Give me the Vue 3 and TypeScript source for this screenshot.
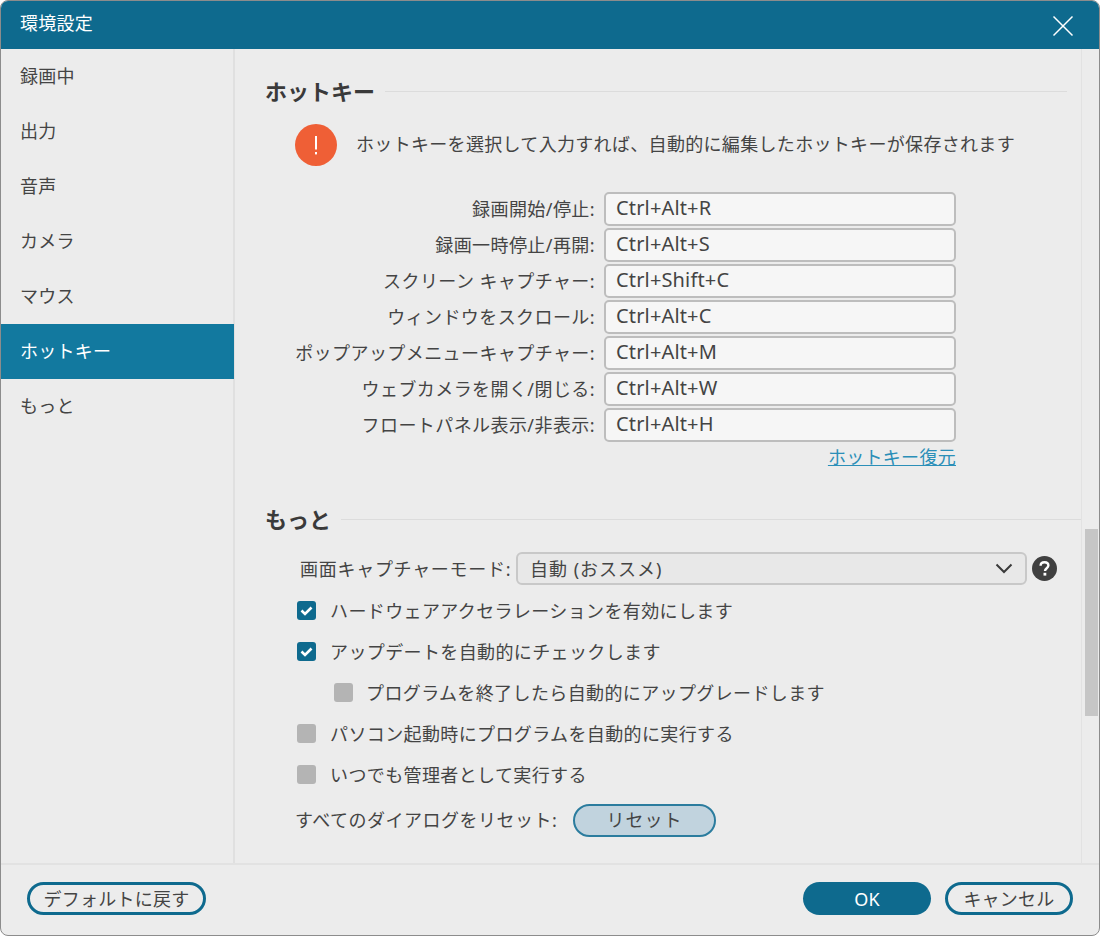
<script setup lang="ts">
const navItems: { label: string; active?: boolean }[] = [
  { label: '録画中' },
  { label: '出力' },
  { label: '音声' },
  { label: 'カメラ' },
  { label: 'マウス' },
  { label: 'ホットキー', active: true },
  { label: 'もっと' },
]
const hotkeys = [
  ['録画開始/停止:', 'Ctrl+Alt+R'],
  ['録画一時停止/再開:', 'Ctrl+Alt+S'],
  ['スクリーン キャプチャー:', 'Ctrl+Shift+C'],
  ['ウィンドウをスクロール:', 'Ctrl+Alt+C'],
  ['ポップアップメニューキャプチャー:', 'Ctrl+Alt+M'],
  ['ウェブカメラを開く/閉じる:', 'Ctrl+Alt+W'],
  ['フロートパネル表示/非表示:', 'Ctrl+Alt+H'],
]
const options = [
  { label: 'ハードウェアアクセラレーションを有効にします', checked: true, sub: false },
  { label: 'アップデートを自動的にチェックします', checked: true, sub: false },
  { label: 'プログラムを終了したら自動的にアップグレードします', checked: false, sub: true },
  { label: 'パソコン起動時にプログラムを自動的に実行する', checked: false, sub: false },
  { label: 'いつでも管理者として実行する', checked: false, sub: false },
]
</script>

<template>
  <div class="window">
    <header class="titlebar">
      <span class="title">環境設定</span>
      <svg class="close" width="22" height="22" viewBox="0 0 22 22" aria-label="閉じる">
        <path d="M1.5 1.5 L20.5 20.5 M20.5 1.5 L1.5 20.5" stroke="#fff" stroke-width="1.5" fill="none" />
      </svg>
    </header>
    <div class="body">
      <nav class="sidebar">
        <div v-for="item in navItems" :key="item.label" class="nav-item" :class="{ active: item.active }">{{ item.label }}</div>
      </nav>
      <main class="content">
        <div class="pane">
          <section class="hotkey-section">
            <div class="heading">
              <h2>ホットキー</h2>
              <span class="rule"></span>
            </div>
            <div class="notice">
              <span class="notice-icon">
                <svg width="42" height="42" viewBox="0 0 42 42">
                  <circle cx="21" cy="21" r="21" fill="#ef5f36" />
                  <path d="M21 12 V25.5" stroke="#fff" stroke-width="2" />
                  <rect x="20" y="28" width="2" height="2.4" fill="#fff" />
                </svg>
              </span>
              <span class="notice-text">ホットキーを選択して入力すれば、自動的に編集したホットキーが保存されます</span>
            </div>
            <div class="hotkey-list">
              <div v-for="row in hotkeys" :key="row[0]" class="hotkey-row">
                <label>{{ row[0] }}</label>
                <div class="input">{{ row[1] }}</div>
              </div>
            </div>
            <div class="restore"><a>ホットキー復元</a></div>
          </section>
          <section class="more-section">
            <div class="heading heading-wide">
              <h2>もっと</h2>
              <span class="rule"></span>
            </div>
            <div class="select-row">
              <label>画面キャプチャーモード:</label>
              <div class="select">
                <span class="select-text">自動 (おススメ)</span>
                <svg width="18" height="11" viewBox="0 0 18 11">
                  <path d="M1.5 1.5 L9 9 L16.5 1.5" stroke="#3a3a3a" stroke-width="2" fill="none" />
                </svg>
              </div>
              <svg class="help" width="25" height="25" viewBox="0 0 25 25">
                <circle cx="12.5" cy="12.5" r="12.5" fill="#404040" />
                <path d="M8.6 9.8 C8.6 7.5 10.3 6.2 12.5 6.2 C14.8 6.2 16.4 7.6 16.4 9.6 C16.4 12.2 13 12.4 13 15" stroke="#fff" stroke-width="2.4" fill="none" />
                <rect x="11.5" y="16.8" width="2.8" height="2.8" fill="#fff" />
              </svg>
            </div>
            <div v-for="opt in options" :key="opt.label" class="option" :class="{ sub: opt.sub }">
              <span class="check" :class="{ on: opt.checked }">
                <svg v-if="opt.checked" width="19" height="19" viewBox="0 0 19 19">
                  <path d="M4.5 9.5 L8 13 L14.5 6.5" stroke="#fff" stroke-width="2.6" fill="none" />
                </svg>
              </span>
              <span class="option-text">{{ opt.label }}</span>
            </div>
            <div class="reset-row">
              <label>すべてのダイアログをリセット:</label>
              <button class="btn reset">リセット</button>
            </div>
          </section>
        </div>
        <div class="scrollbar"><div class="thumb"></div></div>
      </main>
    </div>
    <footer class="footer">
      <button class="btn outline wide">デフォルトに戻す</button>
      <div class="footer-right">
        <button class="btn primary">OK</button>
        <button class="btn outline">キャンセル</button>
      </div>
    </footer>
  </div>
</template>

<style>
html, body { margin: 0; background: #fff; }
</style>

<style scoped>
.window {
  width: 1100px;
  height: 936px;
  box-sizing: border-box;
  display: flex;
  flex-direction: column;
  background: #ececec;
  border: 1px solid #8c8c8c;
  border-radius: 8px;
  overflow: hidden;
  color: #444;
  font-family: "Noto Sans", "Noto Sans CJK JP", sans-serif;
  font-size: 18px;
  letter-spacing: 0.25px;
}
.titlebar {
  flex: 0 0 48px;
  display: flex;
  align-items: center;
  justify-content: space-between;
  padding: 0 25px 0 19px;
  background: #0e6a8e;
  color: #fff;
}
.title { position: relative; top: -3px; }
.close { display: block; margin-top: 2px; }
.body {
  flex: 1;
  min-height: 0;
  display: flex;
}
.sidebar {
  flex: 0 0 232px;
  width: 232px;
  border-right: 2px solid #e0e0e0;
  box-sizing: content-box;
}
.nav-item {
  height: 55px;
  width: 233px;
  box-sizing: border-box;
  padding-left: 19px;
  line-height: 54px;
}
.nav-item.active {
  background: #12799f;
  color: #fff;
}
.content {
  flex: 1;
  min-width: 0;
  display: flex;
}
.pane {
  flex: 1;
  min-width: 0;
  overflow: hidden;
  box-sizing: border-box;
  padding-top: 27px;
  padding-left: 30px;
}
.heading {
  display: flex;
  align-items: center;
  gap: 10px;
  height: 30px;
  margin-right: 14px;
}
.heading-wide { margin-right: 0; }
.heading h2 {
  margin: 0;
  font-size: 22px;
  font-weight: 700;
  color: #3a3a3a;
  letter-spacing: 0;
  position: relative;
  top: -1px;
}
.rule {
  flex: 1;
  height: 1px;
  background: #dcdcdc;
}
.notice {
  display: flex;
  align-items: center;
  gap: 19px;
  margin: 18px 0 0 30px;
  height: 42px;
}
.notice-icon { display: block; height: 42px; }
.notice-text { position: relative; top: -2px; letter-spacing: 0.32px; }
.hotkey-list {
  margin-top: 26px;
  display: flex;
  flex-direction: column;
  gap: 2px;
}
.hotkey-row {
  display: flex;
  align-items: center;
  height: 34px;
}
.hotkey-row label {
  width: 330px;
  text-align: right;
  white-space: nowrap;
  letter-spacing: 0.42px;
  padding-bottom: 3px;
}
.input {
  width: 352px;
  height: 34px;
  box-sizing: border-box;
  margin-left: 9px;
  padding-left: 10px;
  line-height: 27px;
  font-size: 20px;
  background: #f6f6f6;
  border: 2px solid #bdbdbd;
  border-radius: 5px;
  letter-spacing: 0.15px;
}
.restore {
  width: 691px;
  text-align: right;
  margin-top: 3px;
  height: 26px;
  line-height: 24px;
}
.restore a {
  color: #2b8fb8;
  text-decoration: underline;
  letter-spacing: 0.3px;
}
.more-section { margin-top: 33px; }
.select-row {
  display: flex;
  align-items: center;
  height: 32px;
  margin: 18px 0 0 35px;
}
.select-row label {
  width: 210px;
  white-space: nowrap;
  letter-spacing: 0.72px;
}
.select {
  width: 511px;
  height: 33px;
  box-sizing: border-box;
  margin-left: 6px;
  padding: 0 12px;
  display: flex;
  align-items: center;
  justify-content: space-between;
  background: #e8e8e8;
  border: 2px solid #c8c8c8;
  border-radius: 6px;
  letter-spacing: 0;
}
.select-text { letter-spacing: 1px; }
.help { margin-left: 5px; display: block; }
.option {
  display: flex;
  align-items: center;
  gap: 14px;
  height: 41px;
  margin-left: 32px;
}
.option-text { letter-spacing: 0.38px; position: relative; top: -1px; }
.select-row + .option { margin-top: 6px; }
.option.sub { margin-left: 69px; gap: 13px; }
.check {
  flex: 0 0 19px;
  width: 19px;
  height: 19px;
  border-radius: 3px;
  background: #b4b4b4;
}
.check svg { display: block; }
.check.on { background: #0e6a8e; }
.reset-row {
  display: flex;
  align-items: center;
  margin: 8px 0 0 30px;
  height: 34px;
}
.reset-row label {
  width: 278px;
  white-space: nowrap;
  letter-spacing: 0.5px;
  padding-bottom: 2px;
}
.btn {
  font: inherit;
  letter-spacing: inherit;
  height: 33px;
  width: 128px;
  box-sizing: border-box;
  padding: 0;
  border-radius: 17px;
  color: #444;
  line-height: 1;
}
.reset {
  width: 143px;
  background: #c1d3de;
  border: 2px solid #2b7c9e;
  letter-spacing: 1px;
}
.scrollbar {
  flex: 0 0 18px;
  border-left: 1px solid #e2e2e2;
  box-sizing: border-box;
  position: relative;
}
.thumb {
  position: absolute;
  left: 3px;
  right: 1px;
  top: 480px;
  height: 187px;
  background: #c6c6c6;
}
.footer {
  flex: 0 0 72px;
  border-top: 2px solid #e2e2e2;
  box-sizing: border-box;
  display: flex;
  align-items: center;
  justify-content: space-between;
  padding: 0 26px 3px 26px;
}
.footer-right { display: flex; gap: 14px; }
.outline {
  background: transparent;
  border: 3px solid #0e6a8e;
}
.wide { width: 179px; }
.primary {
  background: #0e6a8e;
  border: 0;
  color: #fff;
}
</style>
